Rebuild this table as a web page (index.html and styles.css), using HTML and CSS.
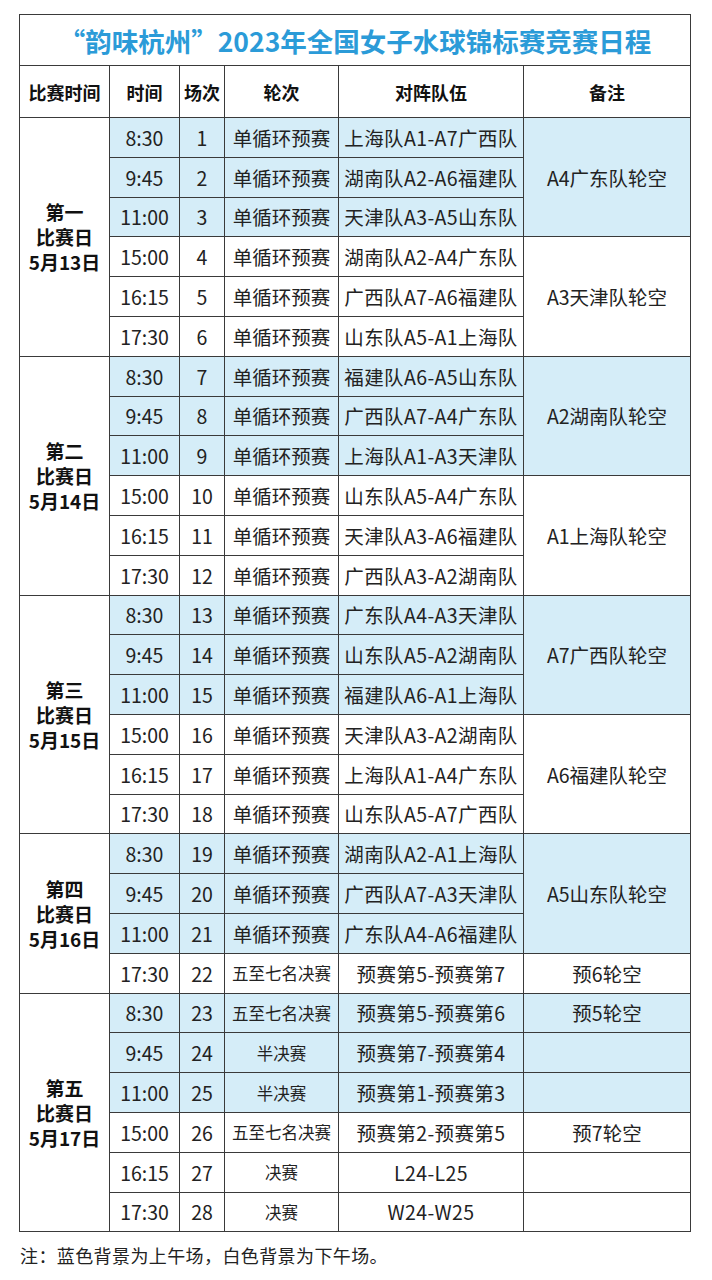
FILE: index.html
```html
<!DOCTYPE html>
<html lang="zh-CN">
<head>
<meta charset="utf-8">
<title>“韵味杭州”2023年全国女子水球锦标赛竞赛日程</title>
<link rel="stylesheet" href="styles.css">
</head>
<body>
<div class="page">
<table class="sched">
  <colgroup>
    <col class="c-day"><col class="c-time"><col class="c-no"><col class="c-round"><col class="c-match"><col class="c-note">
  </colgroup>
  <thead>
    <tr class="title-row"><th colspan="6" class="title">“韵味杭州”2023年全国女子水球锦标赛竞赛日程</th></tr>
    <tr class="head-row"><th>比赛时间</th><th>时间</th><th>场次</th><th>轮次</th><th>对阵队伍</th><th>备注</th></tr>
  </thead>
  <tbody>
    <tr class="am"><td rowspan="6" class="day">第一<br>比赛日<br>5月13日</td><td>8:30</td><td>1</td><td>单循环预赛</td><td class="mt">上海队A1-A7广西队</td><td rowspan="3">A4广东队轮空</td></tr>
    <tr class="am"><td>9:45</td><td>2</td><td>单循环预赛</td><td class="mt">湖南队A2-A6福建队</td></tr>
    <tr class="am"><td>11:00</td><td>3</td><td>单循环预赛</td><td class="mt">天津队A3-A5山东队</td></tr>
    <tr class="pm"><td>15:00</td><td>4</td><td>单循环预赛</td><td class="mt">湖南队A2-A4广东队</td><td rowspan="3">A3天津队轮空</td></tr>
    <tr class="pm"><td>16:15</td><td>5</td><td>单循环预赛</td><td class="mt">广西队A7-A6福建队</td></tr>
    <tr class="pm"><td>17:30</td><td>6</td><td>单循环预赛</td><td class="mt">山东队A5-A1上海队</td></tr>

    <tr class="am"><td rowspan="6" class="day">第二<br>比赛日<br>5月14日</td><td>8:30</td><td>7</td><td>单循环预赛</td><td class="mt">福建队A6-A5山东队</td><td rowspan="3">A2湖南队轮空</td></tr>
    <tr class="am"><td>9:45</td><td>8</td><td>单循环预赛</td><td class="mt">广西队A7-A4广东队</td></tr>
    <tr class="am"><td>11:00</td><td>9</td><td>单循环预赛</td><td class="mt">上海队A1-A3天津队</td></tr>
    <tr class="pm"><td>15:00</td><td>10</td><td>单循环预赛</td><td class="mt">山东队A5-A4广东队</td><td rowspan="3">A1上海队轮空</td></tr>
    <tr class="pm"><td>16:15</td><td>11</td><td>单循环预赛</td><td class="mt">天津队A3-A6福建队</td></tr>
    <tr class="pm"><td>17:30</td><td>12</td><td>单循环预赛</td><td class="mt">广西队A3-A2湖南队</td></tr>

    <tr class="am"><td rowspan="6" class="day">第三<br>比赛日<br>5月15日</td><td>8:30</td><td>13</td><td>单循环预赛</td><td class="mt">广东队A4-A3天津队</td><td rowspan="3">A7广西队轮空</td></tr>
    <tr class="am"><td>9:45</td><td>14</td><td>单循环预赛</td><td class="mt">山东队A5-A2湖南队</td></tr>
    <tr class="am"><td>11:00</td><td>15</td><td>单循环预赛</td><td class="mt">福建队A6-A1上海队</td></tr>
    <tr class="pm"><td>15:00</td><td>16</td><td>单循环预赛</td><td class="mt">天津队A3-A2湖南队</td><td rowspan="3">A6福建队轮空</td></tr>
    <tr class="pm"><td>16:15</td><td>17</td><td>单循环预赛</td><td class="mt">上海队A1-A4广东队</td></tr>
    <tr class="pm"><td>17:30</td><td>18</td><td>单循环预赛</td><td class="mt">山东队A5-A7广西队</td></tr>

    <tr class="am"><td rowspan="4" class="day">第四<br>比赛日<br>5月16日</td><td>8:30</td><td>19</td><td>单循环预赛</td><td class="mt">湖南队A2-A1上海队</td><td rowspan="3">A5山东队轮空</td></tr>
    <tr class="am"><td>9:45</td><td>20</td><td>单循环预赛</td><td class="mt">广西队A7-A3天津队</td></tr>
    <tr class="am"><td>11:00</td><td>21</td><td>单循环预赛</td><td class="mt">广东队A4-A6福建队</td></tr>
    <tr class="pm"><td>17:30</td><td>22</td><td class="sm">五至七名决赛</td><td class="mt">预赛第5-预赛第7</td><td>预6轮空</td></tr>

    <tr class="am"><td rowspan="6" class="day">第五<br>比赛日<br>5月17日</td><td>8:30</td><td>23</td><td class="sm">五至七名决赛</td><td class="mt">预赛第5-预赛第6</td><td>预5轮空</td></tr>
    <tr class="am"><td>9:45</td><td>24</td><td class="sm">半决赛</td><td class="mt">预赛第7-预赛第4</td><td></td></tr>
    <tr class="am"><td>11:00</td><td>25</td><td class="sm">半决赛</td><td class="mt">预赛第1-预赛第3</td><td></td></tr>
    <tr class="pm"><td>15:00</td><td>26</td><td class="sm">五至七名决赛</td><td class="mt">预赛第2-预赛第5</td><td>预7轮空</td></tr>
    <tr class="pm"><td>16:15</td><td>27</td><td class="sm">决赛</td><td class="mt">L24-L25</td><td></td></tr>
    <tr class="pm"><td>17:30</td><td>28</td><td class="sm">决赛</td><td class="mt">W24-W25</td><td></td></tr>
  </tbody>
</table>
<p class="note">注：蓝色背景为上午场，白色背景为下午场。</p>
</div>
</body>
</html>
```

FILE: styles.css
```css
html, body {
  margin: 0;
  padding: 0;
  background: #ffffff;
}
body {
  font-family: "Noto Sans CJK SC", "Noto Sans", sans-serif;
  color: #222222;
}
.page {
  padding: 14px 0 0 19px;
}
.sched {
  width: 671px;
  table-layout: fixed;
  border-collapse: collapse;
  border: 1.5px solid #333333;
}
.c-day { width: 90px; }
.c-time { width: 70px; }
.c-no { width: 45px; }
.c-round { width: 114px; }
.c-match { width: 185px; }
.c-note { width: 167px; }

.sched th, .sched td {
  border: 1.5px solid #3a3a3a;
  padding: 0;
  text-align: center;
  vertical-align: middle;
  white-space: nowrap;
  overflow: hidden;
}
.title-row { height: 51px; }
.title {
  font-size: 26.5px;
  font-weight: 700;
  color: #2b9bd8;
}
.head-row { height: 52px; }
.head-row th {
  font-size: 18px;
  font-weight: 700;
  color: #111111;
}
.sched tbody tr { height: 39.8px; }
.sched td {
  font-size: 19.5px;
  color: #222222;
}
.sched td.mt { letter-spacing: 0.4px; }
.sched tr.am td { background: #d5edf8; }
.sched tr.pm td { background: #ffffff; }
.sched tr td.day {
  background: #ffffff;
  font-size: 19px;
  font-weight: 700;
  line-height: 25px;
  color: #111111;
}
.sched td.sm { font-size: 16.5px; }
.note {
  margin: 10px 0 0 1px;
  font-size: 18px;
  letter-spacing: 0.4px;
  color: #222222;
}
```
